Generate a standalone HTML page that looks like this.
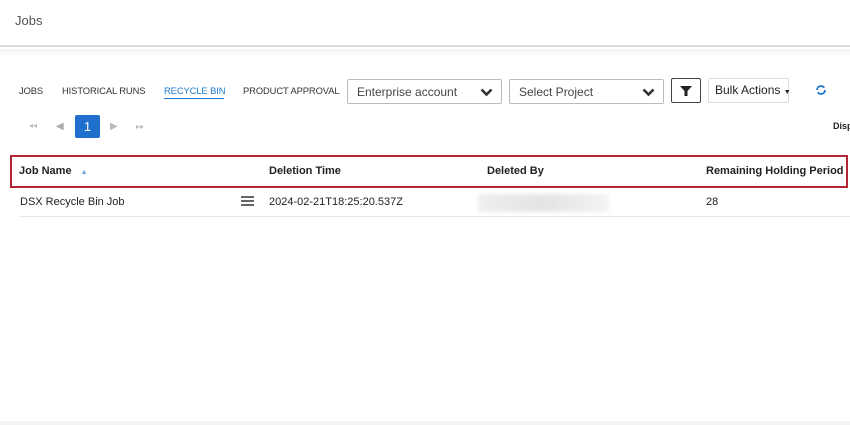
<!DOCTYPE html>
<html><head><style>
*{box-sizing:border-box;margin:0;padding:0}
body{width:850px;height:425px;overflow:hidden;background:#fff;font-family:"Liberation Sans",Arial,sans-serif;color:#222;position:relative}
.hdr{position:absolute;left:0;top:0;width:850px;height:47px;background:#fff;border-bottom:2px solid #dcdcde}
.hdr span{position:absolute;left:15px;top:13px;font-size:13px;color:#555}
.band{position:absolute;left:0;top:49px;width:850px;height:8px;background:linear-gradient(#f4f4f6,#fff)}
.t{position:absolute;font-size:9.4px;color:#333;top:85px;white-space:nowrap;letter-spacing:-0.1px}
.sel{position:absolute;top:79px;height:25px;border:1px solid #bbb;border-radius:2px;font-size:12px;color:#444;padding:5px 9px;white-space:nowrap}
.sel svg{position:absolute;right:8px;top:8px}
.foot{position:absolute;left:0;top:421px;width:850px;height:4px;background:#f3f3f3}
.b{position:absolute;font-size:11px;font-weight:bold;color:#222;top:165px;white-space:nowrap}
.c{position:absolute;font-size:11px;color:#222;top:196px;white-space:nowrap}
</style></head><body>
<div class="hdr"><span>Jobs</span></div>
<div class="band"></div>
<div class="t" style="left:19px">JOBS</div>
<div class="t" style="left:62px">HISTORICAL RUNS</div>
<div class="t" style="left:164px;color:#1f7ad0">RECYCLE BIN</div>
<div style="position:absolute;left:164px;top:98px;width:60px;height:1px;background:#1f7ad0"></div>
<div class="t" style="left:243px">PRODUCT APPROVAL</div>
<div class="sel" style="left:347px;width:155px">Enterprise account<svg width="13" height="9" viewBox="0 0 13 9"><path d="M1.5 1.5l5 5 5-5" stroke="#333" stroke-width="2.6" fill="none"/></svg></div>
<div class="sel" style="left:509px;width:155px">Select Project<svg width="13" height="9" viewBox="0 0 13 9"><path d="M1.5 1.5l5 5 5-5" stroke="#333" stroke-width="2.6" fill="none"/></svg></div>
<div style="position:absolute;left:671px;top:78px;width:30px;height:25px;border:1px solid #444;border-radius:2px"><svg width="14" height="14" viewBox="0 0 14 14" style="position:absolute;left:7px;top:5px"><path d="M1 2h12l-4.5 5v5l-3 0v-5z" fill="#222"/></svg></div>
<div style="position:absolute;left:708px;top:78px;width:81px;height:25px;border:1px solid #ddd;border-radius:2px;font-size:12px;padding:4px 6px;white-space:nowrap">Bulk Actions <span style="font-size:7px">▼</span></div>
<svg width="12" height="12" viewBox="0 0 12 12" style="position:absolute;left:815px;top:84px"><circle cx="6" cy="6" r="4" stroke="#1f7ad0" stroke-width="1.8" fill="none" stroke-dasharray="10 2.5"/></svg>
<div style="position:absolute;left:29px;top:121px;font-size:8px;color:#bbb">◂◂</div>
<div style="position:absolute;left:56px;top:121px;font-size:10px;color:#aaa">◀</div>
<div style="position:absolute;left:75px;top:115px;width:25px;height:23px;background:#1f6fcc;border-radius:2px;color:#fff;font-size:13px;text-align:center;line-height:23px">1</div>
<div style="position:absolute;left:110px;top:121px;font-size:10px;color:#bbb">▶</div>
<div style="position:absolute;left:136px;top:122px;font-size:8px;color:#bbb">▸▸</div>
<div style="position:absolute;left:833px;top:121px;font-size:9px;font-weight:bold">Disp</div>
<div style="position:absolute;left:10px;top:155px;width:838px;height:33px;border:2.5px solid #b22436"></div>
<div class="b" style="left:19px">Job Name <span style="color:#6a9fd6;font-size:7px;margin-left:6px">▲</span></div>
<div class="b" style="left:269px">Deletion Time</div>
<div class="b" style="left:487px">Deleted By</div>
<div class="b" style="left:706px">Remaining Holding Period</div>
<div class="c" style="left:20px">DSX Recycle Bin Job</div>
<svg width="13" height="10" style="position:absolute;left:241px;top:196px"><path d="M0 1h13M0 5h13M0 9h13" stroke="#333" stroke-width="1.6"/></svg>
<div class="c" style="left:269px">2024-02-21T18:25:20.537Z</div>
<div style="position:absolute;left:478px;top:194px;width:131px;height:18px;background:linear-gradient(90deg,#eee,#e4e4e4,#f3f3f3);filter:blur(2px)"></div>
<div class="c" style="left:706px">28</div>
<div style="position:absolute;left:19px;top:216px;width:831px;height:1px;background:#e6e6e6"></div>
<div class="foot"></div>
</body></html>
